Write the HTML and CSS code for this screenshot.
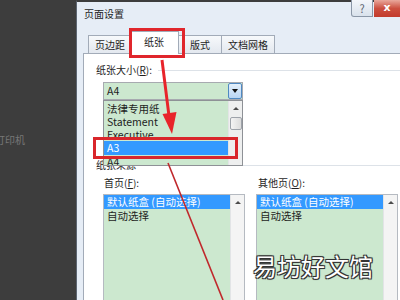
FILE: index.html
```html
<!DOCTYPE html>
<html lang="zh-CN">
<head>
  <meta charset="UTF-8">
  <title>页面设置</title>
  <link rel="stylesheet" href="styles.css">
</head>
<body>

<div class="desk">
  <span class="desk-label">打印机</span>
</div>

<div class="dialog">
  <div class="caption">
    <span class="caption-title">页面设置</span>
    <span class="btn-help">?</span>
    <span class="btn-close">x</span>
  </div>

  <div class="client">
    <div class="tabs">
      <span class="tab">页边距</span>
      <span class="tab active">纸张</span>
      <span class="tab">版式</span>
      <span class="tab">文档网格</span>
    </div>

    <div class="panel">
      <div class="group-title"><span>纸张大小(<u>R</u>):</span></div>

      <div class="combo">
        <span class="combo-value">A4</span>
        <span class="combo-btn"></span>

        <!-- open dropdown -->
        <div class="popup">
          <div class="popup-items">
            <div class="item">法律专用纸</div>
            <div class="item">Statement</div>
            <div class="item">Executive</div>
            <div class="item selected">A3</div>
            <div class="item">A4</div>
          </div>
          <div class="scroll">
            <span class="scroll-up"></span>
            <span class="scroll-thumb"></span>
          </div>
        </div>
      </div>

      <div class="group-title source"><span>纸张来源</span></div>

      <div class="sources">
        <div class="source-col">
          <div class="source-label">首页(<u>F</u>):</div>
          <div class="listbox">
            <div class="list-items">
              <div class="item selected">默认纸盒 (自动选择)</div>
              <div class="item">自动选择</div>
            </div>
            <div class="scroll"><span class="scroll-up"></span></div>
          </div>
        </div>
        <div class="source-col">
          <div class="source-label other">其他页(<u>O</u>):</div>
          <div class="listbox">
            <div class="list-items">
              <div class="item selected">默认纸盒 (自动选择)</div>
              <div class="item">自动选择</div>
            </div>
            <div class="scroll"><span class="scroll-up"></span></div>
          </div>
        </div>
      </div>
    </div>
  </div>
</div>

<!-- annotations drawn over the screenshot -->
<svg class="marks" width="400" height="300" viewBox="0 0 400 300">
  <rect x="130.5" y="29.5" width="53" height="27" fill="none" stroke="#e0262c" stroke-width="3"/>
  <rect x="94.5" y="138.5" width="142" height="19" fill="none" stroke="#d9262b" stroke-width="3"/>
  <line x1="162" y1="60" x2="169" y2="116" stroke="#e8232a" stroke-width="3"/>
  <polygon points="172,134 162.5,114 176.5,112" fill="#e8232a"/>
  <line x1="168" y1="163" x2="223" y2="300" stroke="#c0282c" stroke-width="1.6"/>
</svg>

<div class="watermark">易坊好文馆</div>

</body>
</html>
```

FILE: styles.css
```css
* {
  box-sizing: border-box;
}

body {
  margin: 0;
  width: 400px;
  height: 300px;
  overflow: hidden;
  position: relative;
  display: flex;
  background-color: #3d3d3d;
  font-family: "Noto Sans CJK SC", sans-serif;
  font-size: 10.5px;
  color: #1e1e1e;
}

u {
  text-decoration: underline;
}

/* dark Word window behind the dialog */
.desk {
  width: 76px;
  flex: none;
  padding-top: 134px;
  overflow: hidden;
}

.desk-label {
  display: block;
  margin-left: -5px;
  color: #777;
  font-size: 10px;
  line-height: 12px;
}

/* dialog */
.dialog {
  flex: 1;
  display: flex;
  flex-direction: column;
  border-left: 1px solid #5d6672;
  border-top: 2px solid #3d3d3d;
  background-color: #e6edf6;
}

.caption {
  height: 25px;
  flex: none;
  display: flex;
  align-items: flex-start;
}

.caption-title {
  flex: 1;
  padding: 6px 0 0 7px;
  font-size: 10px;
  line-height: 12px;
}

.btn-help,
.btn-close {
  height: 17px;
  margin-top: -2px;
  text-align: center;
  line-height: 16px;
}

.btn-help {
  width: 22px;
  border: 1px solid #8b97a7;
  border-top: none;
  border-radius: 0 0 0 3px;
  background: linear-gradient(#f3f6fa, #d9e2ec);
  color: #5b6470;
  font-size: 11px;
}

.btn-close {
  width: 26px;
  margin-left: 1px;
  background: linear-gradient(#e9a89c, #cc4f3f 50%, #c23b2c);
  color: #fff;
  font-family: "DejaVu Sans", sans-serif;
  font-weight: bold;
  font-size: 11px;
}

.client {
  flex: 1;
  display: flex;
  flex-direction: column;
  padding-left: 6px;
}

/* tabs */
.tabs {
  height: 26px;
  flex: none;
  display: flex;
  align-items: flex-end;
  padding-left: 5px;
}

.tab {
  min-width: 44px;
  height: 18px;
  padding: 0 6px;
  margin-right: -1px;
  border: 1px solid #a2abb8;
  border-bottom: none;
  background: linear-gradient(#f7f9fb, #e3e8ef);
  text-align: center;
  font-size: 10px;
  line-height: 17px;
}

.tab.active {
  position: relative;
  z-index: 1;
  min-width: 50px;
  height: 23px;
  margin: 0 -1px -1px -2px;
  background: #fff;
  line-height: 20px;
}

/* tab page */
.panel {
  flex: 1;
  background-color: #fff;
  border: 1px solid #a2abb8;
  border-right: none;
  border-bottom: none;
  padding-left: 12px;
}

.group-title {
  display: flex;
  align-items: center;
  gap: 6px;
  margin-top: 10px;
  font-size: 10px;
  line-height: 12px;
}

.group-title::after {
  content: "";
  flex: 1;
  height: 1px;
  background-color: #dde2e8;
}

.group-title.source {
  margin-top: 59px;
}

/* combobox with its open list */
.combo {
  position: relative;
  width: 140px;
  height: 18px;
  margin: 6px 0 0 7px;
  display: flex;
  border: 1px solid #a7aab0;
  background-color: #cce8cf;
}

.combo-value {
  flex: 1;
  padding-left: 3px;
  line-height: 16px;
}

.combo-btn {
  width: 14px;
  border: 1px solid #4f89c2;
  border-radius: 2px;
  background: linear-gradient(#e4f0fb, #b9d5f2);
  display: flex;
  align-items: center;
  justify-content: center;
}

.combo-btn::before {
  content: "";
  border-left: 3px solid transparent;
  border-right: 3px solid transparent;
  border-top: 4px solid #111;
}

.popup {
  position: absolute;
  left: -1px;
  top: 17px;
  z-index: 2;
  width: 140px;
  height: 66px;
  display: flex;
  border: 1px solid #8e9196;
  background-color: #cce8cf;
}

.popup-items {
  flex: 1;
  padding-top: 1px;
  overflow: hidden;
}

.item {
  height: 13px;
  padding-left: 3px;
  line-height: 13px;
  white-space: nowrap;
}

.item.selected {
  background-color: #3399ff;
  color: #fff;
}

.popup .item.selected {
  height: 14px;
}

.scroll {
  width: 14px;
  flex: none;
  display: flex;
  flex-direction: column;
  align-items: center;
  background-color: #eeefef;
  border-left: 1px solid #e2e4e6;
}

.scroll-up {
  margin-top: 6px;
  border-left: 3px solid transparent;
  border-right: 3px solid transparent;
  border-bottom: 3px solid #4c4c4c;
}

.scroll-thumb {
  width: 12px;
  height: 13px;
  margin-top: 7px;
  border: 1px solid #9ea3aa;
  border-radius: 2px;
  background: linear-gradient(90deg, #f4f4f4, #dcdcdc);
}

/* paper source */
.sources {
  display: grid;
  grid-template-columns: 142px 142px;
  column-gap: 11px;
  padding-left: 7px;
}

.source-label {
  margin-top: 6px;
  padding-left: 1px;
  font-size: 10px;
  line-height: 12px;
}

.source-label.other {
  padding-left: 2px;
}

.listbox {
  height: 120px;
  margin-top: 5px;
  display: flex;
  border: 1px solid #b5bac1;
  background-color: #cce8cf;
}

.list-items {
  flex: 1;
  overflow: hidden;
}

.listbox .item {
  height: 14px;
  line-height: 14px;
}

.listbox .scroll {
  background-color: #f4f4f4;
}

/* overlays */
.marks {
  position: absolute;
  left: 0;
  top: 0;
  z-index: 5;
  pointer-events: none;
}

.watermark {
  position: absolute;
  left: 253px;
  top: 251px;
  z-index: 6;
  color: #fff;
  font-size: 24px;
  line-height: 30px;
  text-shadow: -1px -1px 0 #333, 1px -1px 0 #333, -1px 1px 0 #333, 1px 1px 0 #333, 0 0 2px #000;
}
```
